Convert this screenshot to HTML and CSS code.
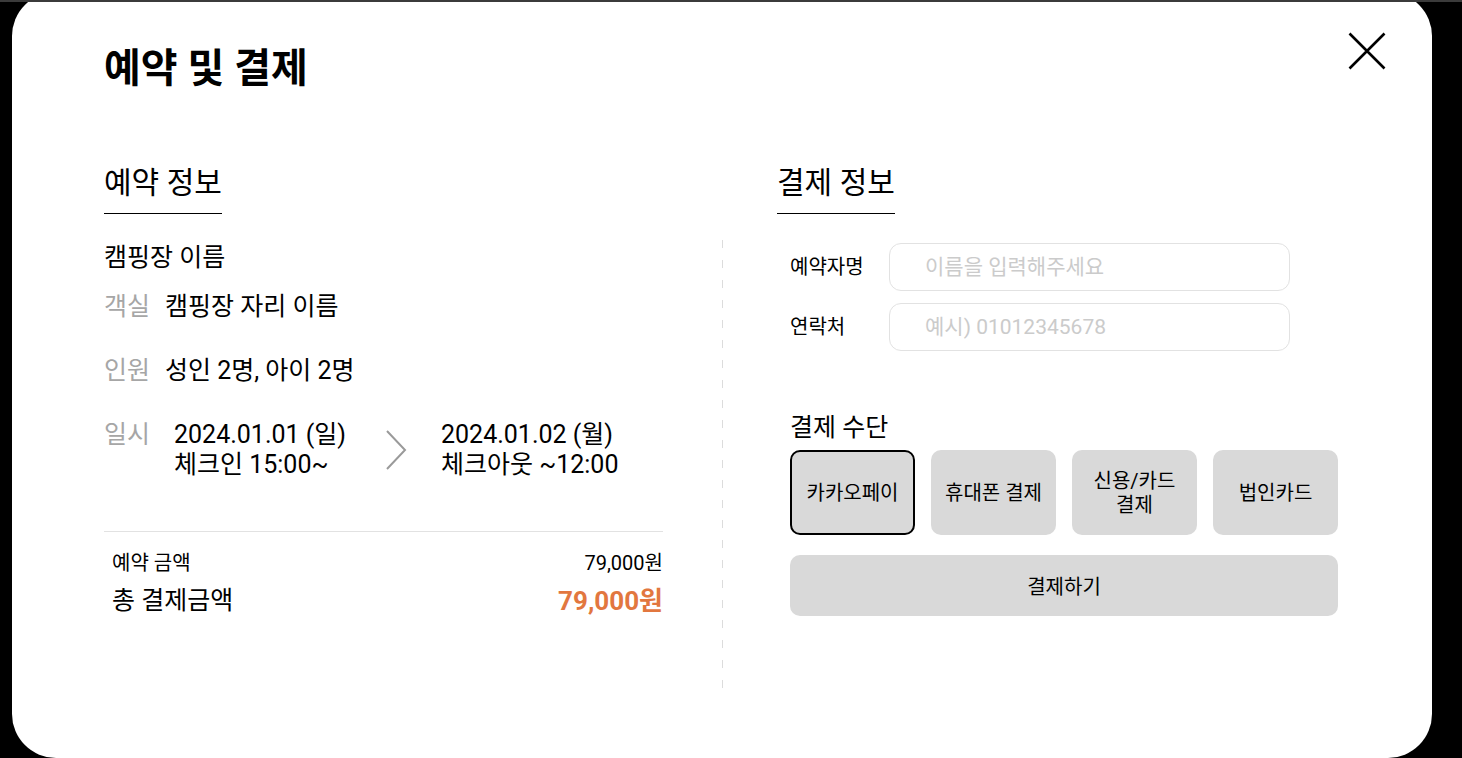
FILE: index.html
```html
<!DOCTYPE html>
<html lang="ko">
<head>
<meta charset="utf-8">
<title>예약 및 결제</title>
<link rel="stylesheet" href="styles.css">
</head>
<body>
<div class="topline"></div>
<div class="modal">
  <button class="close" aria-label="닫기">
    <svg width="38" height="38" viewBox="0 0 38 38"><path d="M1.5 1.5 L36.5 36.5 M36.5 1.5 L1.5 36.5" stroke="#000" stroke-width="2.6" fill="none"/></svg>
  </button>
  <h1 class="title">예약 및 결제</h1>
  <div class="columns">
    <section class="col-left">
      <h2 class="section-title">예약 정보</h2>
      <div class="site-name">캠핑장 이름</div>
      <div class="row row-room"><span class="label">객실</span><span class="value">캠핑장 자리 이름</span></div>
      <div class="row row-people"><span class="label">인원</span><span class="value">성인 2명, 아이 2명</span></div>
      <div class="row row-date">
        <span class="label">일시</span>
        <div class="date-in">2024.01.01 (일)<br>체크인 15:00~</div>
        <svg class="arrow" width="22" height="42" viewBox="0 0 22 42"><path d="M2 2 L20 21 L2 40" stroke="#9a9a9a" stroke-width="2" fill="none"/></svg>
        <div class="date-out">2024.01.02 (월)<br>체크아웃 ~12:00</div>
      </div>
      <div class="price-row small"><span>예약 금액</span><span>79,000원</span></div>
      <div class="price-row total"><span>총 결제금액</span><span class="total-price">79,000원</span></div>
    </section>
    <div class="divider"></div>
    <section class="col-right">
      <h2 class="section-title">결제 정보</h2>
      <div class="form">
        <div class="field"><label class="field-label">예약자명</label><input class="input" type="text" placeholder="이름을 입력해주세요"></div>
        <div class="field"><label class="field-label">연락처</label><input class="input" type="text" placeholder="예시) 01012345678"></div>
        <div class="method-title">결제 수단</div>
        <div class="methods">
          <button class="method selected">카카오페이</button>
          <button class="method">휴대폰 결제</button>
          <button class="method">신용/카드<br>결제</button>
          <button class="method">법인카드</button>
        </div>
        <button class="pay">결제하기</button>
      </div>
    </section>
  </div>
</div>
</body>
</html>
```
FILE: styles.css
```css
html, body {
  margin: 0;
  padding: 0;
  background: #000;
  height: 758px;
  overflow: hidden;
}
body {
  font-family: Roboto, "Noto Sans CJK KR", sans-serif;
  color: #000;
}
.topline {
  position: fixed;
  top: 0;
  left: 0;
  right: 0;
  height: 2px;
  background: #3b3b3b;
  z-index: 5;
}
.modal {
  position: relative;
  box-sizing: border-box;
  width: 1420px;
  height: 766px;
  margin: -8px 0 0 12px;
  background: #fff;
  border-radius: 44px;
  padding: 53px 94px 0 92px;
}
.close {
  position: absolute;
  top: 40px;
  right: 46px;
  width: 38px;
  height: 38px;
  padding: 0;
  border: 0;
  background: none;
}
.close svg { display: block; }
.title {
  margin: 0;
  font-size: 40px;
  line-height: 48px;
  font-weight: 700;
}
.columns {
  display: flex;
  margin-top: 72px;
}
.col-left {
  width: 559px;
}
.section-title {
  margin: 0;
  width: fit-content;
  font-size: 30px;
  line-height: 36px;
  font-weight: 400;
  padding-bottom: 12px;
  border-bottom: 1px solid #000;
}
.site-name {
  margin-top: 28px;
  font-size: 25px;
  line-height: 32px;
}
.row {
  display: flex;
  font-size: 25px;
  line-height: 32px;
}
.row .label {
  color: #a6a6a6;
  width: 61px;
  flex: none;
}
.row-room { margin-top: 17px; }
.row-people { margin-top: 32px; }
.row-date {
  margin-top: 33px;
  line-height: 30px;
  align-items: flex-start;
}
.row-date .label { width: 70px; }
.date-in { width: 211px; }
.arrow {
  margin-top: 9px;
  flex: none;
}
.date-out { margin-left: 34px; }
.price-row {
  display: flex;
  justify-content: space-between;
  align-items: center;
  padding-left: 8px;
}
.price-row.small {
  margin-top: 51px;
  border-top: 1px solid #e2e2e2;
  padding-top: 18px;
  font-size: 20px;
  line-height: 26px;
}
.price-row.total {
  margin-top: 9px;
  font-size: 25px;
  line-height: 32px;
}
.total-price {
  color: #e2773f;
  font-weight: 700;
  font-size: 26px;
}
.divider {
  flex: none;
  width: 1px;
  height: 460px;
  margin: 75px 0 0 59px;
  background: repeating-linear-gradient(to bottom, #dcdcdc 0 8px, transparent 8px 20px);
}
.col-right {
  width: 561px;
  margin-left: 54px;
}
.form {
  padding-left: 13px;
  margin-top: 29px;
}
.field {
  display: flex;
  align-items: center;
  margin-bottom: 12px;
}
.field-label {
  width: 99px;
  font-size: 20px;
  line-height: 24px;
}
.input {
  box-sizing: border-box;
  width: 401px;
  height: 48px;
  border: 1px solid #e2e2e2;
  border-radius: 12px;
  padding: 0 0 0 35px;
  font-family: Roboto, "Noto Sans CJK KR", sans-serif;
  font-size: 21px;
  color: #000;
  outline: none;
}
.input::placeholder { color: #cbcbcb; }
.method-title {
  margin-top: 62px;
  font-size: 25px;
  line-height: 30px;
}
.methods {
  display: grid;
  grid-template-columns: repeat(4, 125px);
  column-gap: 16px;
  margin-top: 7px;
}
.method {
  box-sizing: border-box;
  height: 85px;
  border: 0;
  border-radius: 10px;
  background: #d9d9d9;
  font-family: Roboto, "Noto Sans CJK KR", sans-serif;
  font-size: 20px;
  line-height: 24px;
  color: #000;
  padding: 0;
}
.method.selected {
  border: 2px solid #000;
}
.pay {
  display: block;
  width: 548px;
  height: 61px;
  margin-top: 20px;
  border: 0;
  border-radius: 10px;
  background: #d9d9d9;
  font-family: Roboto, "Noto Sans CJK KR", sans-serif;
  font-size: 20px;
  color: #000;
}
```
